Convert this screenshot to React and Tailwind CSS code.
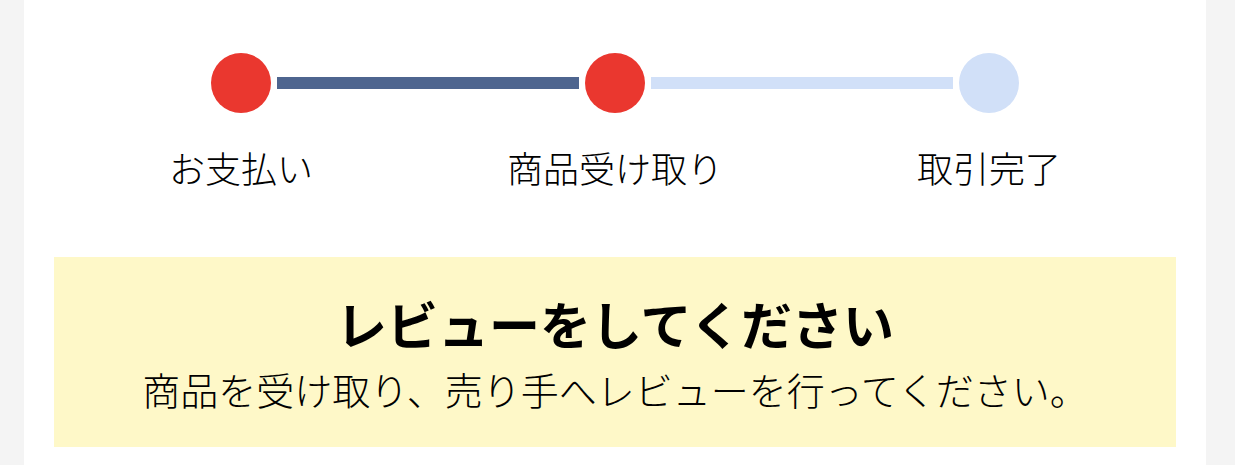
import React from "react";

const steps = ["お支払い", "商品受け取り", "取引完了"];

function Stepper() {
  return (
    <div>
      <div className="flex items-center justify-center">
        <div className="w-[60px] h-[60px] rounded-full bg-[#ea372f]"></div>
        <div className="w-[302px] h-[12px] mx-[6px] bg-[#4e658f]"></div>
        <div className="w-[60px] h-[60px] rounded-full bg-[#ea372f]"></div>
        <div className="w-[302px] h-[12px] mx-[6px] bg-[#d1e0f8]"></div>
        <div className="w-[60px] h-[60px] rounded-full bg-[#d1e0f8]"></div>
      </div>
      <div className="flex justify-center mt-[32px]">
        {steps.map((label) => (
          <div key={label} className="w-[374px] text-center text-[36px] leading-[44px] font-light text-black">
            {label}
          </div>
        ))}
      </div>
    </div>
  );
}

export default function App() {
  return (
    <div
      className="min-h-screen bg-[#f4f4f4] pl-[24px] pr-[29px]"
      style={{ fontFamily: '"Noto Sans CJK JP", "Noto Sans", sans-serif' }}
    >
      <div className="bg-white min-h-[465px] px-[30px] pt-[53px]">
        <Stepper />
        <div className="mt-[68px] h-[190px] pt-[36px] bg-[#fef8c8] flex flex-col items-center text-black">
          <h2 className="text-[51px] font-bold leading-[60px]">レビューをしてください</h2>
          <p className="text-[38px] leading-[46px] mt-[13px] font-light">
            商品を受け取り、売り手へレビューを行ってください。
          </p>
        </div>
      </div>
    </div>
  );
}
